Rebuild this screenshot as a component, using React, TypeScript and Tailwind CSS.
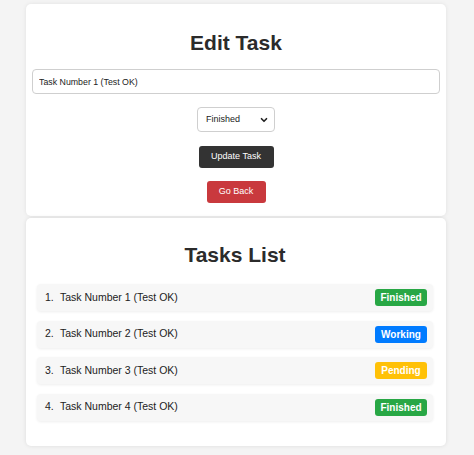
import React, { useState } from 'react';
import { ChevronDown } from 'lucide-react';

type Status = 'Finished' | 'Working' | 'Pending';

const tasks: { id: number; title: string; status: Status }[] = [
    { id: 1, title: 'Task Number 1 (Test OK)', status: 'Finished' },
    { id: 2, title: 'Task Number 2 (Test OK)', status: 'Working' },
    { id: 3, title: 'Task Number 3 (Test OK)', status: 'Pending' },
    { id: 4, title: 'Task Number 4 (Test OK)', status: 'Finished' },
];

const badgeColors: Record<Status, string> = {
    Finished: 'bg-[#28a745]',
    Working: 'bg-[#007bff]',
    Pending: 'bg-[#ffc107]',
};

const App: React.FC = () => {
    const [title, setTitle] = useState('Task Number 1 (Test OK)');
    const [status, setStatus] = useState<Status>('Finished');

    return (
        <div className="min-h-[455px] bg-[#f4f4f4] pt-[4px] font-['Liberation_Sans',Arial,sans-serif] text-[#222]">
            <div className="w-[420px] ml-[26px] flex flex-col gap-[2px]">
                {/* Edit form */}
                <div className="bg-white rounded-[5px] shadow-[0_0_4px_rgba(0,0,0,0.08)] px-[6px] pt-[25px] pb-[13px] flex flex-col items-center">
                    <h1 className="text-[21px] leading-[28px] font-bold text-[#2b2b2b]">Edit Task</h1>
                    <input
                        className="mt-[12px] w-full h-[25px] px-[6px] border border-[#cfcfcf] rounded-[4px] text-[8.8px] text-[#222] outline-none"
                        value={title}
                        onChange={(e) => setTitle(e.target.value)}
                    />
                    <div className="relative mt-[13px] flex">
                        <select
                            className="block appearance-none w-[78px] h-[25px] pl-[8px] pr-[20px] border border-[#cfcfcf] rounded-[4px] text-[9px] bg-white text-[#222] outline-none"
                            value={status}
                            onChange={(e) => setStatus(e.target.value as Status)}
                        >
                            <option>Finished</option>
                            <option>Working</option>
                            <option>Pending</option>
                        </select>
                        <ChevronDown size={10} strokeWidth={4} className="absolute right-[6px] top-1/2 -translate-y-1/2 text-[#222] pointer-events-none" />
                    </div>
                    <button className="mt-[14px] h-[22px] w-[75px] rounded-[3px] bg-[#333333] text-white text-[9px]">
                        Update Task
                    </button>
                    <button className="mt-[13px] h-[22px] w-[59px] rounded-[3px] bg-[#c9393d] text-white text-[9px]">
                        Go Back
                    </button>
                </div>

                {/* Tasks list */}
                <div className="bg-white rounded-[5px] shadow-[0_0_4px_rgba(0,0,0,0.1)] pl-[11px] pr-[13px] pt-[23px] pb-[25px] flex flex-col">
                    <h2 className="text-[21px] leading-[28px] font-bold text-center text-[#2b2b2b]">Tasks List</h2>
                    <ol className="mt-[15px] flex flex-col gap-[9.5px]">
                        {tasks.map((t) => (
                            <li
                                key={t.id}
                                className="h-[27px] flex items-center justify-between pl-[8px] pr-[6px] bg-[#f7f7f7] rounded-[4px] shadow-[0_1px_3px_rgba(0,0,0,0.07)] text-[10.5px]"
                            >
                                <span className="flex items-center">
                                    <span className="w-[15px]">{t.id}.</span>
                                    <span>{t.title}</span>
                                </span>
                                <span className={`h-[17px] w-[52px] flex items-center justify-center rounded-[3px] text-white text-[10px] font-bold ${badgeColors[t.status]}`}>
                                    {t.status}
                                </span>
                            </li>
                        ))}
                    </ol>
                </div>
            </div>
        </div>
    );
};

export default App;
